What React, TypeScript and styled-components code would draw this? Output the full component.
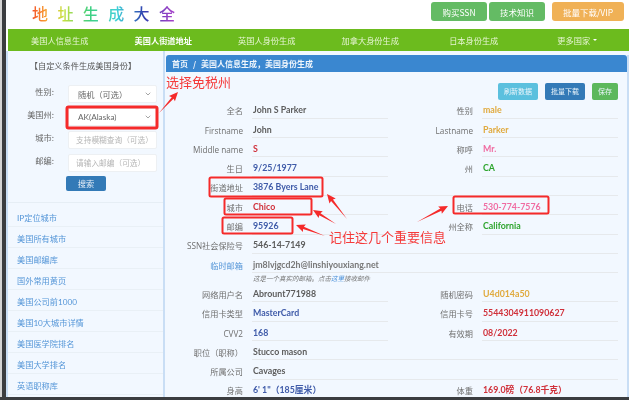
import { createGlobalStyle, styled } from "styled-components";
import { ChevronDown } from "lucide-react";

const FONT = `Lato, "Noto Sans CJK SC", sans-serif`;
const CJK = `"Noto Sans CJK SC", sans-serif`;

const GlobalStyle = createGlobalStyle`
  html, body {
    margin: 0;
    padding: 0;
    background: #ffffff;
    overflow: hidden;
  }
  * {
    box-sizing: border-box;
  }
`;

const Shell = styled.div`
  position: relative;
  width: 629px;
  height: 400px;
  display: flex;
  flex-direction: column;
  overflow: hidden;
  font-family: ${FONT};
  filter: blur(0.55px);
`;

const Desktop = styled.div`
  flex: 1;
  min-height: 0;
  display: flex;
`;

const EdgeStrip = styled.div`
  width: 6px;
  background: #3b3d40;
  border-left: 2px solid #d4d4d4;
`;

const BottomBar = styled.div`
  height: 3px;
  background: #3b3d40;
`;

const Page = styled.div`
  flex: 1;
  min-width: 0;
  display: flex;
  flex-direction: column;
  background: #ffffff;
  padding-left: 2px;
`;

const Header = styled.div`
  height: 29px;
  flex: none;
  display: flex;
  align-items: flex-start;
  padding: 2px 5px 0 24px;
`;

const Logo = styled.div`
  font-family: ${CJK};
  font-size: 16px;
  line-height: 23px;
  font-weight: 500;
  letter-spacing: 9.4px;
  background: linear-gradient(90deg, #f4502a 0%, #f8a030 9%, #c8e040 20%, #40d080 37%, #40d0d8 55%, #3040b0 72%, #a040c8 90%);
  -webkit-background-clip: text;
  background-clip: text;
  color: transparent;
  width: 155px;
  white-space: nowrap;
`;

const HeaderActions = styled.div`
  margin-left: auto;
  display: flex;
  gap: 2px;
`;

const HeaderButton = styled.div<{ $color: string; $width: number; $gap?: number }>`
  width: ${(p) => p.$width}px;
  height: 19px;
  margin-left: ${(p) => p.$gap ?? 0}px;
  display: flex;
  align-items: center;
  justify-content: center;
  border-radius: 3px;
  background: ${(p) => p.$color};
  color: #ffffff;
  font-size: 8.5px;
  font-family: ${CJK};
  opacity: 0.95;
`;

const Nav = styled.div`
  height: 21.5px;
  flex: none;
  display: grid;
  grid-template-columns: repeat(6, 1fr);
  background: #6cbb1e;
`;

const NavItem = styled.div<{ $active?: boolean }>`
  display: flex;
  align-items: center;
  justify-content: center;
  gap: 3px;
  color: ${(p) => (p.$active ? "#ffffff" : "#e6f5d3")};
  font-family: ${CJK};
  font-size: 8.2px;
  font-weight: ${(p) => (p.$active ? 700 : 400)};
`;

const Caret = styled.span`
  width: 0;
  height: 0;
  border-left: 2px solid transparent;
  border-right: 2px solid transparent;
  border-top: 2px solid #ffffff;
`;

const Main = styled.div`
  flex: 1;
  min-height: 0;
  margin-left: -2px;
  display: flex;
  overflow: hidden;
  background: #f2f8ff;
  border-left: 2px solid #c9def5;
`;

const Sidebar = styled.div`
  width: 157px;
  flex: none;
  border-right: 2px solid #c9def5;
  font-family: ${CJK};
`;

const SearchForm = styled.div`
  height: 152px;
  padding-top: 7px;
  border-bottom: 1px solid #e6eef5;
  display: flex;
  flex-direction: column;
`;

const FormTitle = styled.div`
  text-align: center;
  font-size: 8.2px;
  line-height: 14px;
  color: #555555;
  margin-bottom: 13px;
  padding-right: 5px;
`;

const FormRow = styled.div`
  display: flex;
  height: 23px;
`;

const FormLabel = styled.div`
  width: 46px;
  text-align: right;
  font-size: 8.2px;
  line-height: 12px;
  color: #666666;
`;

const FieldBox = styled.div<{ $dark?: boolean }>`
  width: 89px;
  height: 18px;
  margin-left: 14px;
  padding: 0 4px 0 ${(p) => (p.$dark ? 9 : 7)}px;
  display: flex;
  align-items: center;
  justify-content: space-between;
  background: #ffffff;
  border: 1px solid #edf0f3;
  border-radius: 2px;
  font-size: ${(p) => (p.$dark ? 8.2 : 7.7)}px;
  font-family: ${FONT};
  color: ${(p) => (p.$dark ? "#666666" : "#b5b5b5")};
  white-space: nowrap;
`;

const SearchButton = styled.div`
  width: 40px;
  height: 15px;
  margin: -1px 0 0 58px;
  background: #337ab7;
  border-radius: 2px;
  color: #e8f0f8;
  font-size: 8.2px;
  display: flex;
  align-items: center;
  justify-content: center;
`;

const LinkList = styled.div`
  margin-top: 3px;
`;

const LinkItem = styled.div`
  height: 21px;
  padding: 3px 0 0 9px;
  display: flex;
  align-items: center;
  border-bottom: 1px solid #e9f0f6;
  color: #5596d8;
  font-size: 8.2px;
  font-family: ${FONT};
`;

const Panel = styled.div`
  flex: 1;
  min-width: 0;
  margin: 4px 0 0 1px;
  border-right: 2px solid #c9def5;
  display: flex;
  flex-direction: column;
`;

const PanelTitle = styled.div`
  height: 17px;
  flex: none;
  padding-left: 6px;
  display: flex;
  align-items: center;
  gap: 5px;
  background: #3a87d0;
  border-radius: 3px 3px 0 0;
  color: #f0f6fc;
  font-family: ${CJK};
  font-size: 8px;
  font-weight: 700;
`;

const PanelBody = styled.div`
  padding: 11px 8px 0 0;
`;

const Toolbar = styled.div`
  height: 17px;
  display: flex;
  justify-content: flex-end;
  gap: 7px;
  padding-right: 1px;
`;

const ToolButton = styled.div<{ $color: string; $width: number }>`
  width: ${(p) => p.$width}px;
  display: flex;
  align-items: center;
  justify-content: center;
  background: ${(p) => p.$color};
  border-radius: 2px;
  color: #eaf5fb;
  font-family: ${CJK};
  font-size: 7px;
`;

const Row = styled.div`
  display: grid;
  grid-template-columns: 77px 145px 85px 145px;
  height: 19.3px;
`;

const Label = styled.div<{ $link?: boolean }>`
  align-self: end;
  padding-bottom: 2.5px;
  text-align: right;
  font-family: "Open Sans", "Noto Sans CJK SC", sans-serif;
  font-size: 8.2px;
  line-height: 11px;
  white-space: nowrap;
  color: ${(p) => (p.$link ? "#5596d8" : "#6f6f6f")};
`;

const Value = styled.div<{ $color?: string; $wide?: boolean }>`
  margin-left: 9px;
  padding: 0 0 2.5px 1px;
  display: flex;
  align-items: flex-end;
  border-bottom: 1px solid #e6e9ec;
  font-size: 8.8px;
  line-height: 11px;
  font-weight: 700;
  white-space: nowrap;
  color: ${(p) => p.$color ?? "#5c5c5c"};
  grid-column: ${(p) => (p.$wide ? "2 / -1" : "auto")};
`;

const Note = styled.div`
  height: 10px;
  margin-left: 87px;
  font-family: ${CJK};
  font-size: 6.5px;
  line-height: 10px;
  font-style: italic;
  color: #777777;
`;

const NoteLink = styled.span`
  color: #4a90d9;
`;

const Callout = styled.div<{ $left: number; $top: number; $size: number }>`
  position: absolute;
  left: ${(p) => p.$left}px;
  top: ${(p) => p.$top}px;
  font-family: ${CJK};
  font-size: ${(p) => p.$size}px;
  line-height: 1;
  color: #f53a3a;
  white-space: nowrap;
`;

const Overlay = styled.svg`
  position: absolute;
  left: 0;
  top: 0;
  pointer-events: none;
`;

const BLUE = "#3f5ba9";
const RED = "#d0303a";
const GOLD = "#e0aa3e";
const PINK = "#f06ca2";
const GREEN = "#2ea52e";

const sideLinks = [
  "IP定位城市",
  "美国所有城市",
  "美国邮编库",
  "国外常用黄页",
  "美国公司前1000",
  "美国10大城市详情",
  "美国医学院排名",
  "美国大学排名",
  "英语职称库",
];

const markers = [
  { x: 67, y: 107, w: 90, h: 21, sw: 3 },
  { x: 209.5, y: 177.5, w: 113, h: 19, sw: 2 },
  { x: 224.5, y: 198.5, w: 87, h: 16, sw: 2 },
  { x: 222.5, y: 217.5, w: 70, h: 16, sw: 2 },
  { x: 453.5, y: 196.5, w: 95, h: 17, sw: 2 },
];

const arrows = [
  { from: [159, 113], to: [178, 92] },
  { from: [347, 219], to: [327, 194] },
  { from: [336, 224], to: [313, 210] },
  { from: [325, 236], to: [296, 225] },
  { from: [417, 222], to: [448, 206] },
];

// tapered callout arrow: thin at the tail, barbed at the tip
const arrowPoints = (from: number[], to: number[]) => {
  const dx = to[0] - from[0];
  const dy = to[1] - from[1];
  const len = Math.hypot(dx, dy);
  const ux = dx / len;
  const uy = dy / len;
  const at = (along: number, side: number) =>
    `${to[0] - ux * along - uy * side},${to[1] - uy * along + ux * side}`;
  return [
    `${from[0]},${from[1]}`,
    at(8, 1.2),
    at(9, 4),
    `${to[0]},${to[1]}`,
    at(9, -4),
    at(8, -1.2),
  ].join(" ");
};

export default function App() {
  return (
    <>
      <GlobalStyle />
      <Shell>
        <Desktop>
          <EdgeStrip />
          <Page>
            <Header>
              <Logo>地址生成大全</Logo>
              <HeaderActions>
                <HeaderButton $color="#5cb85c" $width={56}>购买SSN</HeaderButton>
                <HeaderButton $color="#5cb85c" $width={56}>技术知识</HeaderButton>
                <HeaderButton $color="#f0ad4e" $width={72} $gap={5}>批量下载/VIP</HeaderButton>
              </HeaderActions>
            </Header>
            <Nav>
              <NavItem>美国人信息生成</NavItem>
              <NavItem $active>美国人街道地址</NavItem>
              <NavItem>英国人身份生成</NavItem>
              <NavItem>加拿大身份生成</NavItem>
              <NavItem>日本身份生成</NavItem>
              <NavItem>更多国家 <Caret /></NavItem>
            </Nav>
            <Main>
              <Sidebar>
                <SearchForm>
                  <FormTitle>【自定义条件生成美国身份】</FormTitle>
                  <FormRow>
                    <FormLabel>性别:</FormLabel>
                    <FieldBox $dark>随机（可选）<ChevronDown size={8} color="#777" /></FieldBox>
                  </FormRow>
                  <FormRow>
                    <FormLabel>美国州:</FormLabel>
                    <FieldBox $dark>AK(Alaska)<ChevronDown size={8} color="#777" /></FieldBox>
                  </FormRow>
                  <FormRow>
                    <FormLabel>城市:</FormLabel>
                    <FieldBox>支持模糊查询（可选）</FieldBox>
                  </FormRow>
                  <FormRow>
                    <FormLabel>邮编:</FormLabel>
                    <FieldBox>请输入邮编（可选）</FieldBox>
                  </FormRow>
                  <SearchButton>搜索</SearchButton>
                </SearchForm>
                <LinkList>
                  {sideLinks.map((link) => (
                    <LinkItem key={link}>{link}</LinkItem>
                  ))}
                </LinkList>
              </Sidebar>
              <Panel>
                <PanelTitle>
                  <span>首页</span>
                  <span>/</span>
                  <span>美国人信息生成，美国身份生成</span>
                </PanelTitle>
                <PanelBody>
                  <Toolbar>
                    <ToolButton $color="#5bc0de" $width={40}>刷新数据</ToolButton>
                    <ToolButton $color="#337ab7" $width={40}>批量下载</ToolButton>
                    <ToolButton $color="#5cb85c" $width={26}>保存</ToolButton>
                  </Toolbar>
                  <Row>
                    <Label>全名</Label><Value>John S Parker</Value>
                    <Label>性别</Label><Value $color={GOLD}>male</Value>
                  </Row>
                  <Row>
                    <Label>Firstname</Label><Value>John</Value>
                    <Label>Lastname</Label><Value $color={GOLD}>Parker</Value>
                  </Row>
                  <Row>
                    <Label>Middle name</Label><Value $color={RED}>S</Value>
                    <Label>称呼</Label><Value $color={PINK}>Mr.</Value>
                  </Row>
                  <Row>
                    <Label>生日</Label><Value $color={BLUE}>9/25/1977</Value>
                    <Label>州</Label><Value $color={GREEN}>CA</Value>
                  </Row>
                  <Row>
                    <Label>街道地址</Label><Value $wide $color={BLUE}>3876 Byers Lane</Value>
                  </Row>
                  <Row>
                    <Label>城市</Label><Value $color={RED}>Chico</Value>
                    <Label>电话</Label><Value $color={PINK}>530-774-7576</Value>
                  </Row>
                  <Row>
                    <Label>邮编</Label><Value $color={BLUE}>95926</Value>
                    <Label>州全称</Label><Value $color={GREEN}>California</Value>
                  </Row>
                  <Row>
                    <Label>SSN社会保险号</Label><Value $wide>546-14-7149</Value>
                  </Row>
                  <Row>
                    <Label $link>临时邮箱</Label><Value $wide $color="#777777">jm8lvjgcd2h@linshiyouxiang.net</Value>
                  </Row>
                  <Note>这是一个真实的邮箱。点击<NoteLink>这里</NoteLink>接收邮件</Note>
                  <Row>
                    <Label>网络用户名</Label><Value>Abrount771988</Value>
                    <Label>随机密码</Label><Value $color={GOLD}>U4d014a50</Value>
                  </Row>
                  <Row>
                    <Label>信用卡类型</Label><Value $color={BLUE}>MasterCard</Value>
                    <Label>信用卡号</Label><Value $color={RED}>5544304911090627</Value>
                  </Row>
                  <Row>
                    <Label>CVV2</Label><Value $color={BLUE}>168</Value>
                    <Label>有效期</Label><Value $color={RED}>08/2022</Value>
                  </Row>
                  <Row>
                    <Label>职位（职称）</Label><Value $wide>Stucco mason</Value>
                  </Row>
                  <Row>
                    <Label>所属公司</Label><Value $wide>Cavages</Value>
                  </Row>
                  <Row>
                    <Label>身高</Label><Value $color={BLUE}>6' 1"（185厘米）</Value>
                    <Label>体重</Label><Value $color={RED}>169.0磅（76.8千克）</Value>
                  </Row>
                </PanelBody>
              </Panel>
            </Main>
          </Page>
        </Desktop>
        <BottomBar />
        <Overlay width={629} height={400}>
          {markers.map((m) => (
            <rect key={m.x} x={m.x} y={m.y} width={m.w} height={m.h} rx={1.5} fill="none" stroke="#f52a2a" strokeWidth={m.sw} />
          ))}
          {arrows.map((a) => (
            <polygon key={a.to[0]} points={arrowPoints(a.from, a.to)} fill="#f52a2a" />
          ))}
        </Overlay>
        <Callout $left={166} $top={75} $size={13}>选择免税州</Callout>
        <Callout $left={329} $top={230} $size={13}>记住这几个重要信息</Callout>
      </Shell>
    </>
  );
}
